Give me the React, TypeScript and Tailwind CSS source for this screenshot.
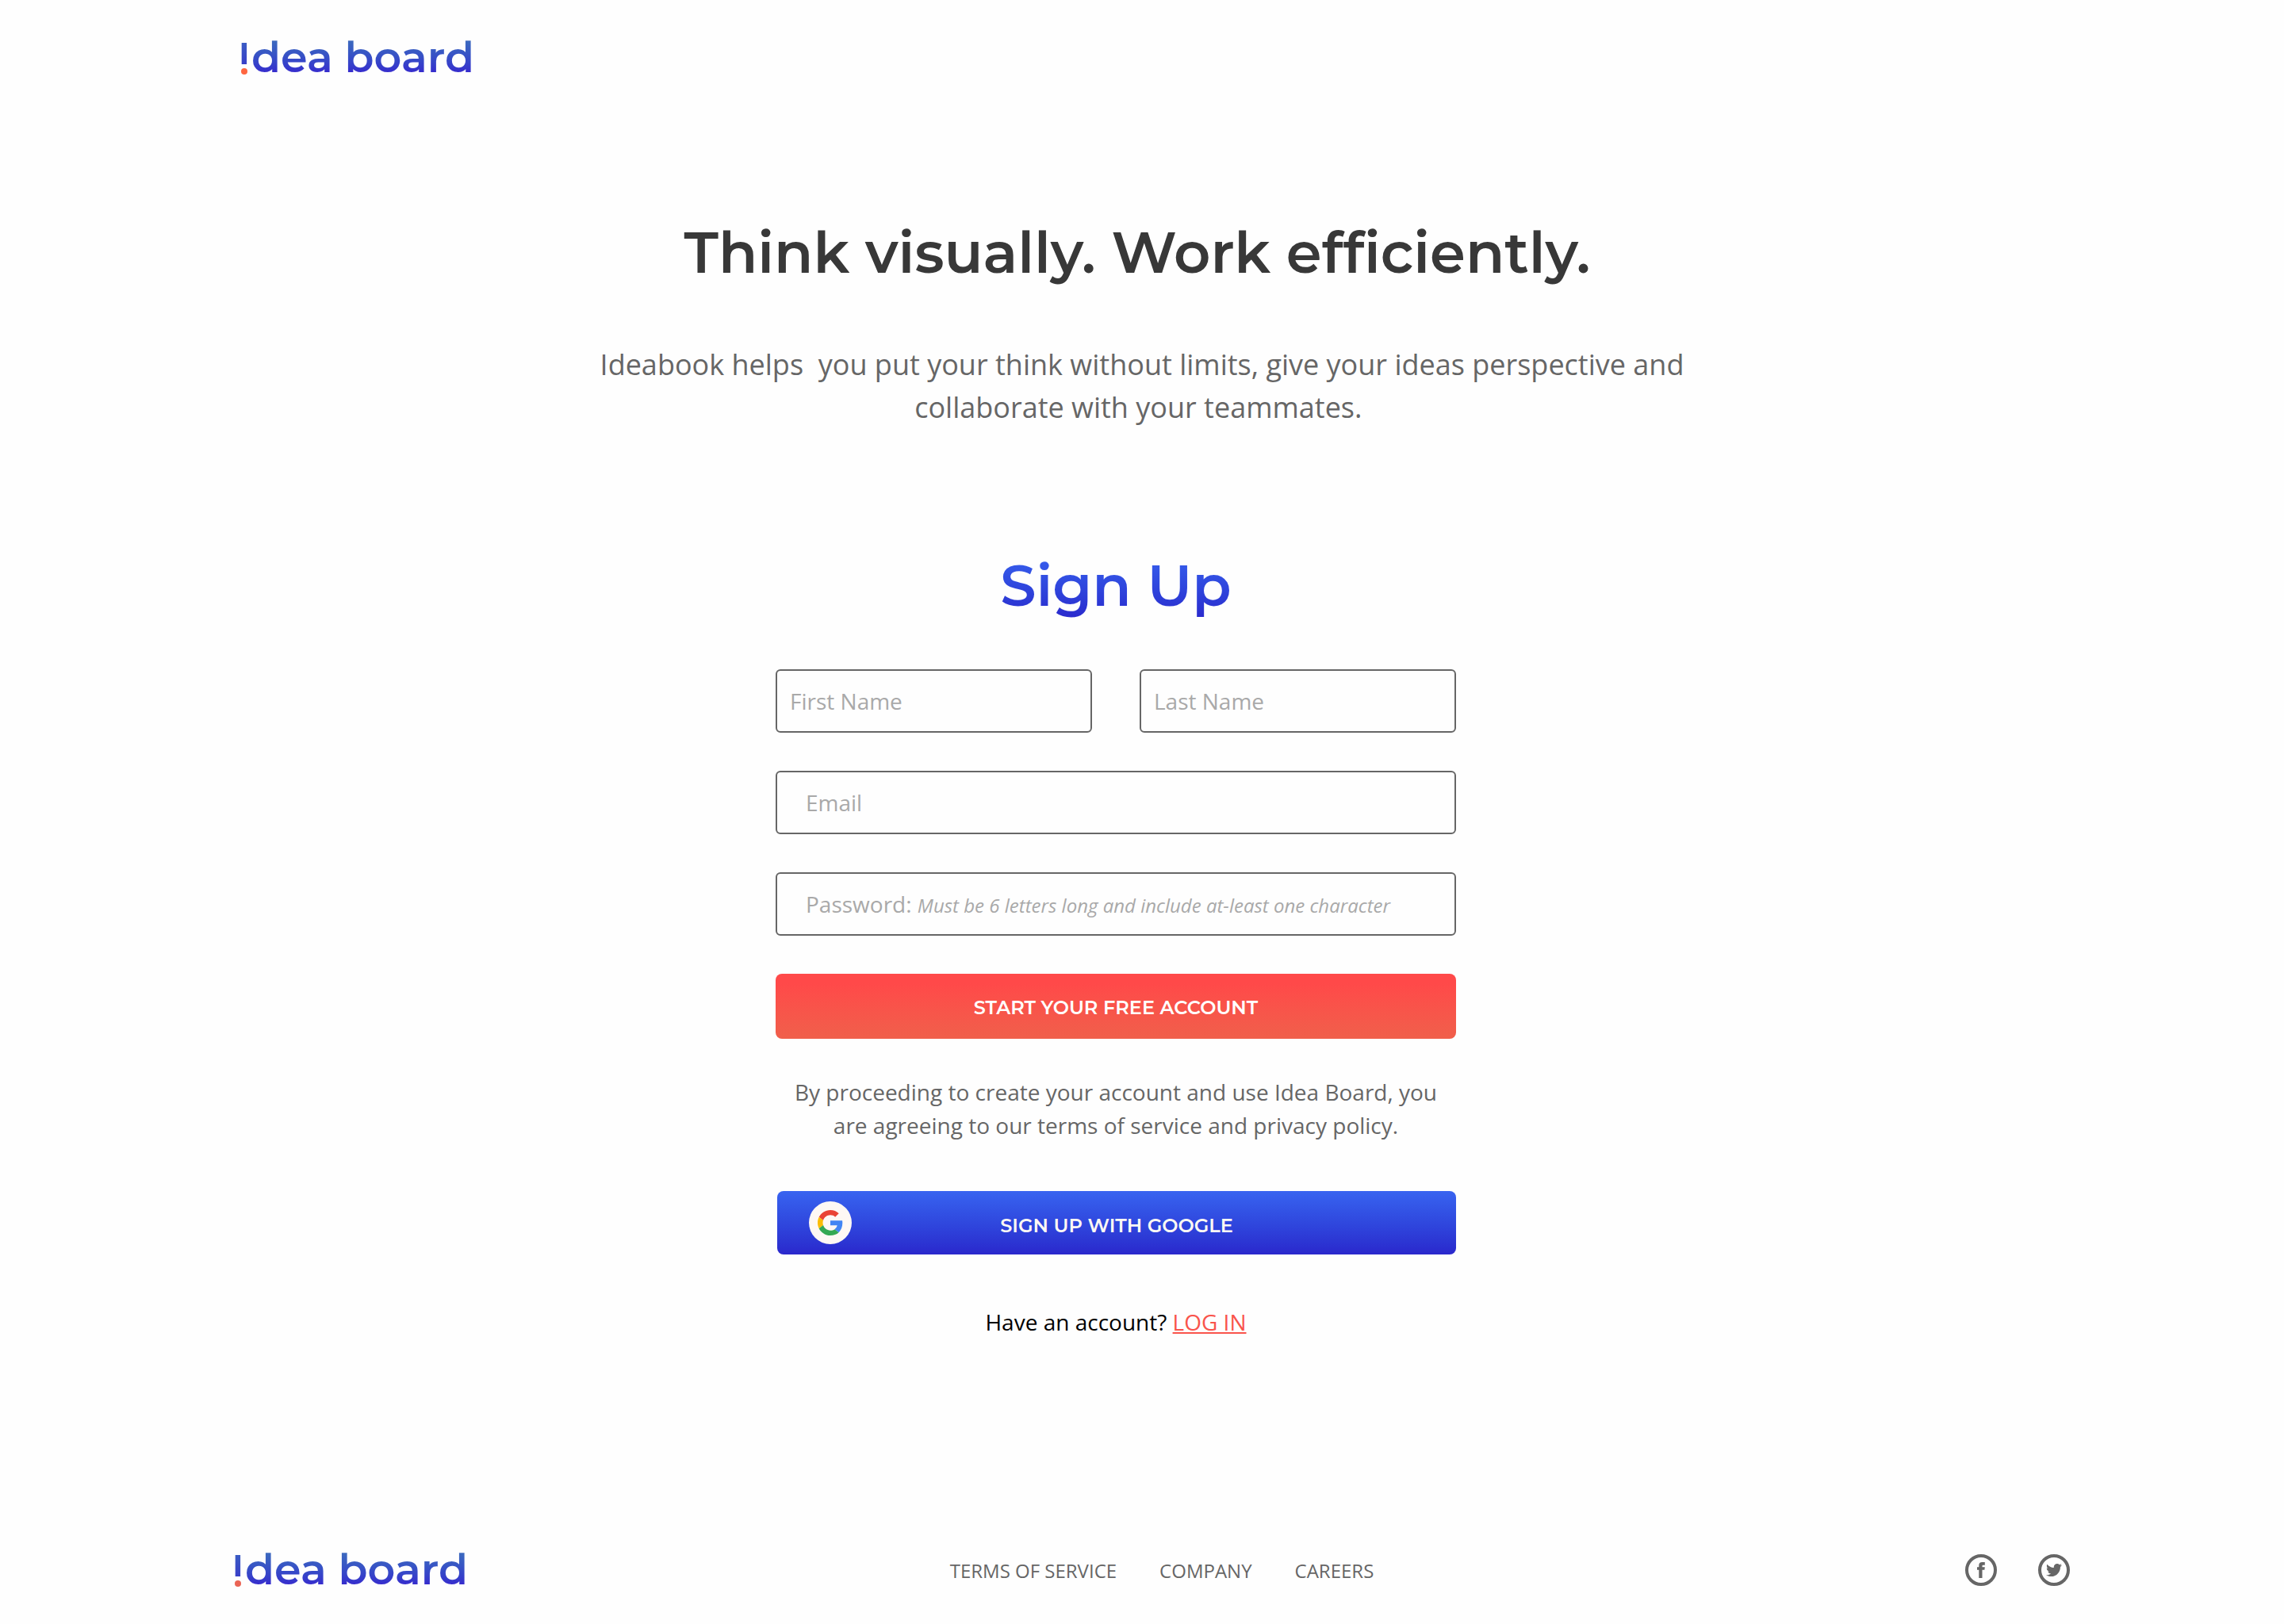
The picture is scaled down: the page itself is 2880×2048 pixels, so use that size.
import { FaTwitter } from "react-icons/fa";

const DISPLAY = "font-[Montserrat,Inter,sans-serif]";
const FIELD =
  "h-20 w-full rounded-[6px] border-2 border-[#666666] bg-transparent text-[28px] text-[#383838] outline-none placeholder:text-[#a9a9a9] placeholder:opacity-100";

function Logo({ dot }: { dot: string }) {
  return (
    <a href="#" aria-label="Idea board" className="flex w-fit items-center gap-[5px]">
      <svg viewBox="0 0 8 42" className="h-[42px] w-2 overflow-visible" aria-hidden="true">
        <defs>
          <linearGradient id="bar" x1="0" y1="0" x2="0" y2="1">
            <stop offset="0" stopColor="#3b5cc4" />
            <stop offset="1" stopColor="#383fc8" />
          </linearGradient>
        </defs>
        <rect x="0.7" y="3" width="6.4" height="27" fill="url(#bar)" />
        <circle cx="4" cy="39" r="4" fill={dot} />
      </svg>
      <span
        className={`${DISPLAY} bg-linear-to-b from-[#3c68bf] from-20% to-[#362bcd] to-80% bg-clip-text text-[54px] leading-[64px] font-semibold text-transparent`}
      >
        dea board
      </span>
    </a>
  );
}

function GoogleMark() {
  return (
    <svg viewBox="0 0 48 48" className="size-8" aria-hidden="true">
      <path
        fill="#ea4335"
        d="M24 9.5c3.54 0 6.71 1.22 9.21 3.6l6.85-6.85C35.9 2.38 30.47 0 24 0 14.62 0 6.51 5.38 2.56 13.22l7.98 6.19C12.43 13.72 17.74 9.5 24 9.5z"
      />
      <path
        fill="#4285f4"
        d="M46.98 24.55c0-1.57-.15-3.09-.38-4.55H24v9.02h12.94c-.58 2.96-2.26 5.48-4.78 7.18l7.73 6c4.51-4.18 7.09-10.36 7.09-17.65z"
      />
      <path
        fill="#fbbc05"
        d="M10.53 28.59c-.48-1.45-.76-2.99-.76-4.59s.27-3.14.76-4.59l-7.98-6.19C.92 16.46 0 20.12 0 24c0 3.88.92 7.54 2.56 10.78l7.97-6.19z"
      />
      <path
        fill="#34a853"
        d="M24 48c6.48 0 11.93-2.13 15.89-5.81l-7.73-6c-2.15 1.45-4.92 2.3-8.16 2.3-6.26 0-11.57-4.22-13.47-9.91l-7.98 6.19C6.51 42.62 14.62 48 24 48z"
      />
    </svg>
  );
}

function FacebookMark() {
  return (
    <svg viewBox="0 0 10 20" className="h-5 w-[10px]" fill="currentColor" aria-hidden="true">
      <path d="M2.3 20V9.8H0V6.2h2.3V4.1C2.3 1.4 3.7 0 6.3 0H9.8v3.7H7.6c-.8 0-1.1.4-1.1 1.1v1.4h3.3l-.4 3.6H6.5V20z" />
    </svg>
  );
}

export default function App() {
  return (
    <div className="flex min-h-screen flex-col bg-[#fefefe] font-['Open_Sans',sans-serif] text-[#666666]">
      <header className="px-[304px] pt-10">
        <Logo dot="#ff6640" />
      </header>

      <main className="flex flex-col items-center">
        <h1
          className={`${DISPLAY} mt-[170px] pr-3 text-center text-[72px] leading-[88px] font-semibold text-[#383838] [font-variant-ligatures:none]`}
        >
          Think visually. Work efficiently.
        </h1>
        <p className="mt-[71px] max-w-[1400px] text-center text-[36px] leading-[54px]">
          Ideabook helps&nbsp; you put your think without limits, give your ideas perspective and collaborate with your
          teammates.&nbsp;
        </p>

        <section className="mt-[153px] flex w-full justify-center pr-[66px]">
          <form className="flex w-full max-w-[858px] flex-col" onSubmit={(e) => e.preventDefault()}>
            <h2
              className={`${DISPLAY} mx-auto bg-linear-to-b from-[#3863f0] to-[#2a27cc] bg-clip-text text-[72px] leading-[88px] font-semibold text-transparent`}
            >
              Sign Up
            </h2>

            <div className="mt-[62px] flex flex-col gap-12">
              <div className="grid grid-cols-2 gap-[60px]">
                <input aria-label="First Name" placeholder="First Name" className={`${FIELD} px-4`} />
                <input aria-label="Last Name" placeholder="Last Name" className={`${FIELD} px-4`} />
              </div>
              <input type="email" aria-label="Email" placeholder="Email" className={`${FIELD} px-9`} />
              <div className="relative">
                <input id="password" type="password" placeholder=" " className={`${FIELD} peer block px-9`} />
                <label
                  htmlFor="password"
                  className="pointer-events-none invisible absolute inset-0 flex items-center px-[38px] text-[28px] text-[#a9a9a9] peer-placeholder-shown:visible"
                >
                  <span className="whitespace-nowrap">
                    Password: <em className="text-[24px]">Must be 6 letters long and include at-least one character</em>
                  </span>
                </label>
              </div>
              <button
                type="submit"
                className={`${DISPLAY} h-[82px] rounded-lg bg-linear-to-b from-[#ff4949] from-15% to-[#f05f4b] pt-1 text-[24px] font-semibold text-white`}
              >
                START YOUR FREE ACCOUNT
              </button>
            </div>

            <p className="mt-[46px] px-5 text-center text-[28px] leading-[42px]">
              By proceeding to create your account and use Idea Board, you are agreeing to our terms of service and
              privacy policy.
            </p>

            <button
              type="button"
              className={`${DISPLAY} relative mt-[62px] ml-0.5 flex h-20 items-center justify-center rounded-lg bg-linear-to-b from-[#3863f0] to-[#2a27cc] pt-2 text-[24px] font-semibold text-[#fef8f4]`}
            >
              <span className="absolute top-[13px] left-10 grid size-[54px] place-items-center rounded-full bg-[#fef8f4]">
                <GoogleMark />
              </span>
              SIGN UP WITH GOOGLE
            </button>

            <p className="mt-16 text-center text-[28px] leading-[42px] text-black">
              Have an account?{" "}
              <a href="#" className="text-[#f9544c] underline">
                LOG IN
              </a>
            </p>
          </form>
        </section>
      </main>

      <footer className="mt-auto grid grid-cols-[1fr_auto_1fr] items-center pr-[270px] pb-[37px] pl-[296px]">
        <Logo dot="#ea6455" />
        <nav className="flex gap-[54px] pt-1 pl-6 text-[24px] leading-9">
          <a href="#">TERMS OF SERVICE</a>
          <a href="#">COMPANY</a>
          <a href="#">CAREERS</a>
        </nav>
        <div className="flex justify-end gap-[52px] pt-0.5">
          <a href="#" aria-label="Facebook" className="grid size-10 place-items-center rounded-full border-4 border-[#666666]">
            <FacebookMark />
          </a>
          <a href="#" aria-label="Twitter" className="grid size-10 place-items-center rounded-full border-4 border-[#666666]">
            <FaTwitter className="size-5" />
          </a>
        </div>
      </footer>
    </div>
  );
}
